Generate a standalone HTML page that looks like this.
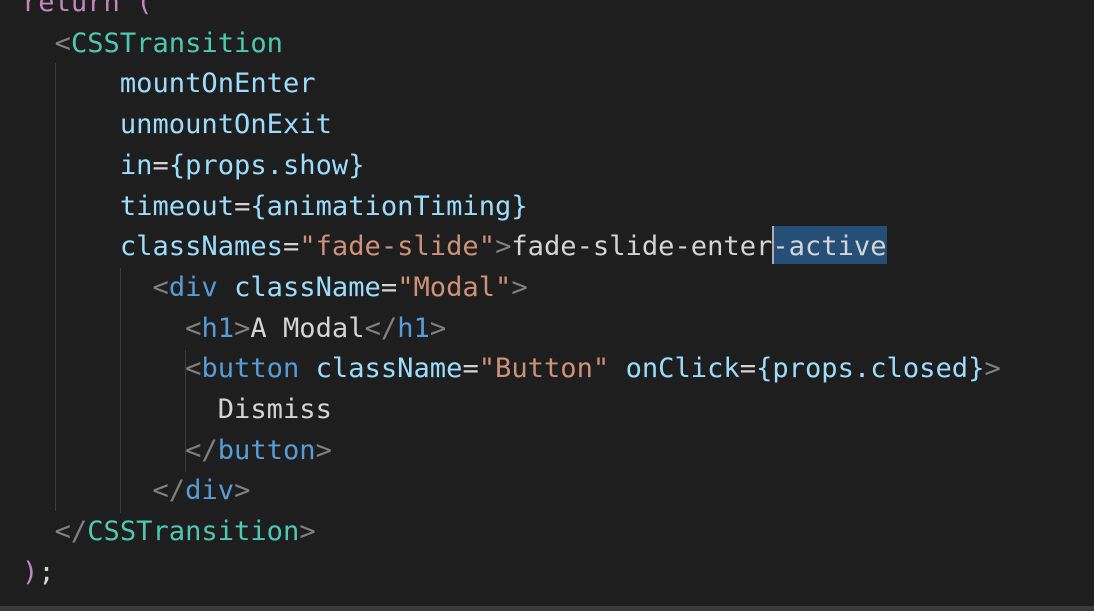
<!DOCTYPE html>
<html><head><style>
html,body{margin:0;padding:0;background:#1e1e1e;width:1094px;height:611px;overflow:hidden;position:relative}
pre{position:absolute;left:22px;top:-17px;margin:0;font-family:"DejaVu Sans Mono","Liberation Mono",monospace;font-size:27.1px;line-height:40.7px;color:#d4d4d4;white-space:pre}
.k{color:#c586c0}.c{color:#4ec9b0}.g{color:#808080}.a{color:#9cdcfe}.s{color:#ce9178}.t{color:#569cd6}
.guide{position:absolute;width:1px;background:#3c3c3c}
.bot{position:absolute;left:0;top:606px;width:1094px;height:5px;background:#3a3a3a}
</style></head><body>
<div class="guide" style="left:55px;top:63px;height:448px"></div>
<div class="guide" style="left:120px;top:268px;height:245px"></div>
<div class="guide" style="left:185px;top:350px;height:122px"></div>
<div style="position:absolute;left:773px;top:226px;width:114px;height:38px;background:#264f78"></div>
<div style="position:absolute;left:772px;top:226px;width:2px;height:38px;background:#aeafad"></div>
<pre><span class="k">return</span> <span class="k">(</span>
  <span class="g">&lt;</span><span class="c">CSSTransition</span>
      <span class="a">mountOnEnter</span>
      <span class="a">unmountOnExit</span>
      <span class="a">in</span>=<span class="a">{props.show}</span>
      <span class="a">timeout</span>=<span class="a">{animationTiming}</span>
      <span class="a">classNames</span>=<span class="s">"fade-slide"</span><span class="g">&gt;</span>fade-slide-enter-active
        <span class="g">&lt;</span><span class="t">div</span> <span class="a">className</span>=<span class="s">"Modal"</span><span class="g">&gt;</span>
          <span class="g">&lt;</span><span class="t">h1</span><span class="g">&gt;</span>A Modal<span class="g">&lt;/</span><span class="t">h1</span><span class="g">&gt;</span>
          <span class="g">&lt;</span><span class="t">button</span> <span class="a">className</span>=<span class="s">"Button"</span> <span class="a">onClick</span>=<span class="a">{props.closed}</span><span class="g">&gt;</span>
            Dismiss
          <span class="g">&lt;/</span><span class="t">button</span><span class="g">&gt;</span>
        <span class="g">&lt;/</span><span class="t">div</span><span class="g">&gt;</span>
  <span class="g">&lt;/</span><span class="c">CSSTransition</span><span class="g">&gt;</span>
<span class="k">)</span>;</pre>
<div class="bot"></div>
</body></html>
